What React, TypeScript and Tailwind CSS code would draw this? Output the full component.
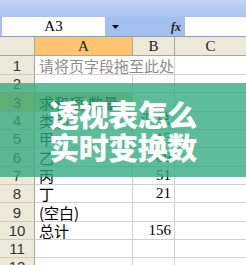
const cjk = "font-['Noto_Sans_CJK_SC',sans-serif]";
const serif = "font-['Liberation_Serif','Noto_Sans_CJK_SC',serif]";

type Row = {
  n: number;
  h: string;
  a: string;
  b: string;
  head: string;
  aCls: string;
  bCls: string;
};

const grid = "border-r border-b border-r-[#d0d0d0] border-b-[#d0d0d0]";

const rows: Row[] = [
  { n: 1, h: "h-[19px]", a: "请将页字段拖至此处", b: "", head: "bg-[#ece9d8]", aCls: "border-r-0 border-b-[#1c1ca8] text-[#8c8c8c] whitespace-nowrap", bCls: "border-r-[#1c1ca8] border-b-[#1c1ca8]" },
  { n: 2, h: "h-[18px]", a: "", b: "", head: "bg-[#ece9d8]", aCls: "", bCls: "border-b-[#1c1ca8]" },
  { n: 3, h: "h-[19px]", a: "求和项:数量", b: "", head: "bg-[#ffc470]", aCls: "bg-[#d6c79c] text-black border-r-[#1c1ca8] border-b-[#8a8a70]", bCls: "border-r-[#1c1ca8]" },
  { n: 4, h: "h-[18px]", a: "类别", b: "汇总", head: "bg-[#ece9d8]", aCls: "text-black border-r-[#1c1ca8]", bCls: "border-r-[#1c1ca8] border-b-[#1c1ca8]" },
  { n: 5, h: "h-[18px]", a: "甲", b: "15", head: "bg-[#ece9d8]", aCls: "text-black border-r-[#1c1ca8]", bCls: "border-r-[#1c1ca8]" },
  { n: 6, h: "h-[19px]", a: "乙", b: "69", head: "bg-[#ece9d8]", aCls: "text-black border-r-[#1c1ca8]", bCls: "border-r-[#1c1ca8]" },
  { n: 7, h: "h-[18px]", a: "丙", b: "51", head: "bg-[#ece9d8]", aCls: "text-black border-r-[#1c1ca8]", bCls: "border-r-[#1c1ca8]" },
  { n: 8, h: "h-[18px]", a: "丁", b: "21", head: "bg-[#ece9d8]", aCls: "text-black border-r-[#1c1ca8]", bCls: "border-r-[#1c1ca8]" },
  { n: 9, h: "h-[19px]", a: "(空白)", b: "", head: "bg-[#ece9d8]", aCls: "text-black border-r-[#1c1ca8] border-b-[#505050]", bCls: "border-r-[#1c1ca8] border-b-[#505050]" },
  { n: 10, h: "h-[18px]", a: "总计", b: "156", head: "bg-[#ece9d8]", aCls: "text-black border-r-[#1c1ca8] border-b-[#1c1ca8]", bCls: "border-r-[#1c1ca8] border-b-[#1c1ca8]" },
  { n: 11, h: "h-[18px]", a: "", b: "", head: "bg-[#ece9d8]", aCls: "", bCls: "" },
  { n: 12, h: "h-[18px]", a: "", b: "", head: "bg-[#ece9d8]", aCls: "", bCls: "" },
];

export default function App() {
  return (
    <div className="relative w-[246px] h-[265px] overflow-hidden bg-white">
      {/* title bar strip */}
      <div className="h-[17px] bg-gradient-to-b from-[#c2d5f5] to-[#aac3ef]" />

      {/* name box + formula bar */}
      <div className="h-[20px] flex items-stretch bg-[#a3bfee] border-b border-[#8e9bb0]">
        <div className="ml-[2px] w-[103px] bg-white flex items-center justify-center text-[15px] text-black font-['Liberation_Serif',serif] leading-none">
          A3
        </div>
        <div className="w-[80px] flex items-center">
          <svg width="7" height="4" viewBox="0 0 7 4" className="ml-[7px]">
            <path d="M0 0h7L3.5 4z" fill="#111" />
          </svg>
          <span className="ml-auto mr-[4px] text-[12px] italic font-bold text-[#222] font-['Liberation_Serif',serif] leading-none">
            fx
          </span>
        </div>
        <div className="flex-1 bg-white" />
      </div>

      {/* column headers */}
      <div className="grid grid-cols-[35px_98px_42px_1fr] h-[19px] text-[15px] leading-none text-[#222] font-['Liberation_Serif',serif]">
        <div className="bg-[#ece9d8] border-r border-b border-[#aca899]" />
        <div className="bg-[#ffc470] border-r border-b border-[#aca899] flex items-center justify-center">A</div>
        <div className="bg-[#ece9d8] border-r border-b border-[#aca899] flex items-center justify-center">B</div>
        <div className="bg-[#ece9d8] border-b border-[#aca899] flex items-center justify-center">C</div>
      </div>

      {/* sheet rows */}
      {rows.map((r) => (
        <div key={r.n} className={`grid grid-cols-[35px_98px_42px_1fr] ${r.h} text-[15px] leading-none`}>
          <div className={`${r.head} border-r border-b border-r-[#aca899] border-b-[#cfcbbb] flex items-center justify-center text-[#333] font-['Liberation_Sans',sans-serif]`}>
            {r.n}
          </div>
          <div className={`${grid} ${r.aCls} flex items-center pl-[4px] ${cjk}`}>
            {r.a}
          </div>
          <div className={`${grid} ${r.bCls} flex items-center justify-end pr-[3px] text-black ${serif}`}>
            {r.b}
          </div>
          <div className="border-b border-[#d0d0d0]" />
        </div>
      ))}

      {/* green title banner over the sheet */}
      <div className="absolute left-0 right-0 top-[83px] h-[94px] bg-[#2fa97c]/[0.78] flex flex-col items-center justify-center">
        <div className={`text-white text-[30px] font-black leading-[33px] tracking-[-0.5px] ${cjk}`}>
          透视表怎么
        </div>
        <div className={`text-white text-[30px] font-black leading-[33px] tracking-[-0.5px] ${cjk}`}>
          实时变换数
        </div>
      </div>
    </div>
  );
}
